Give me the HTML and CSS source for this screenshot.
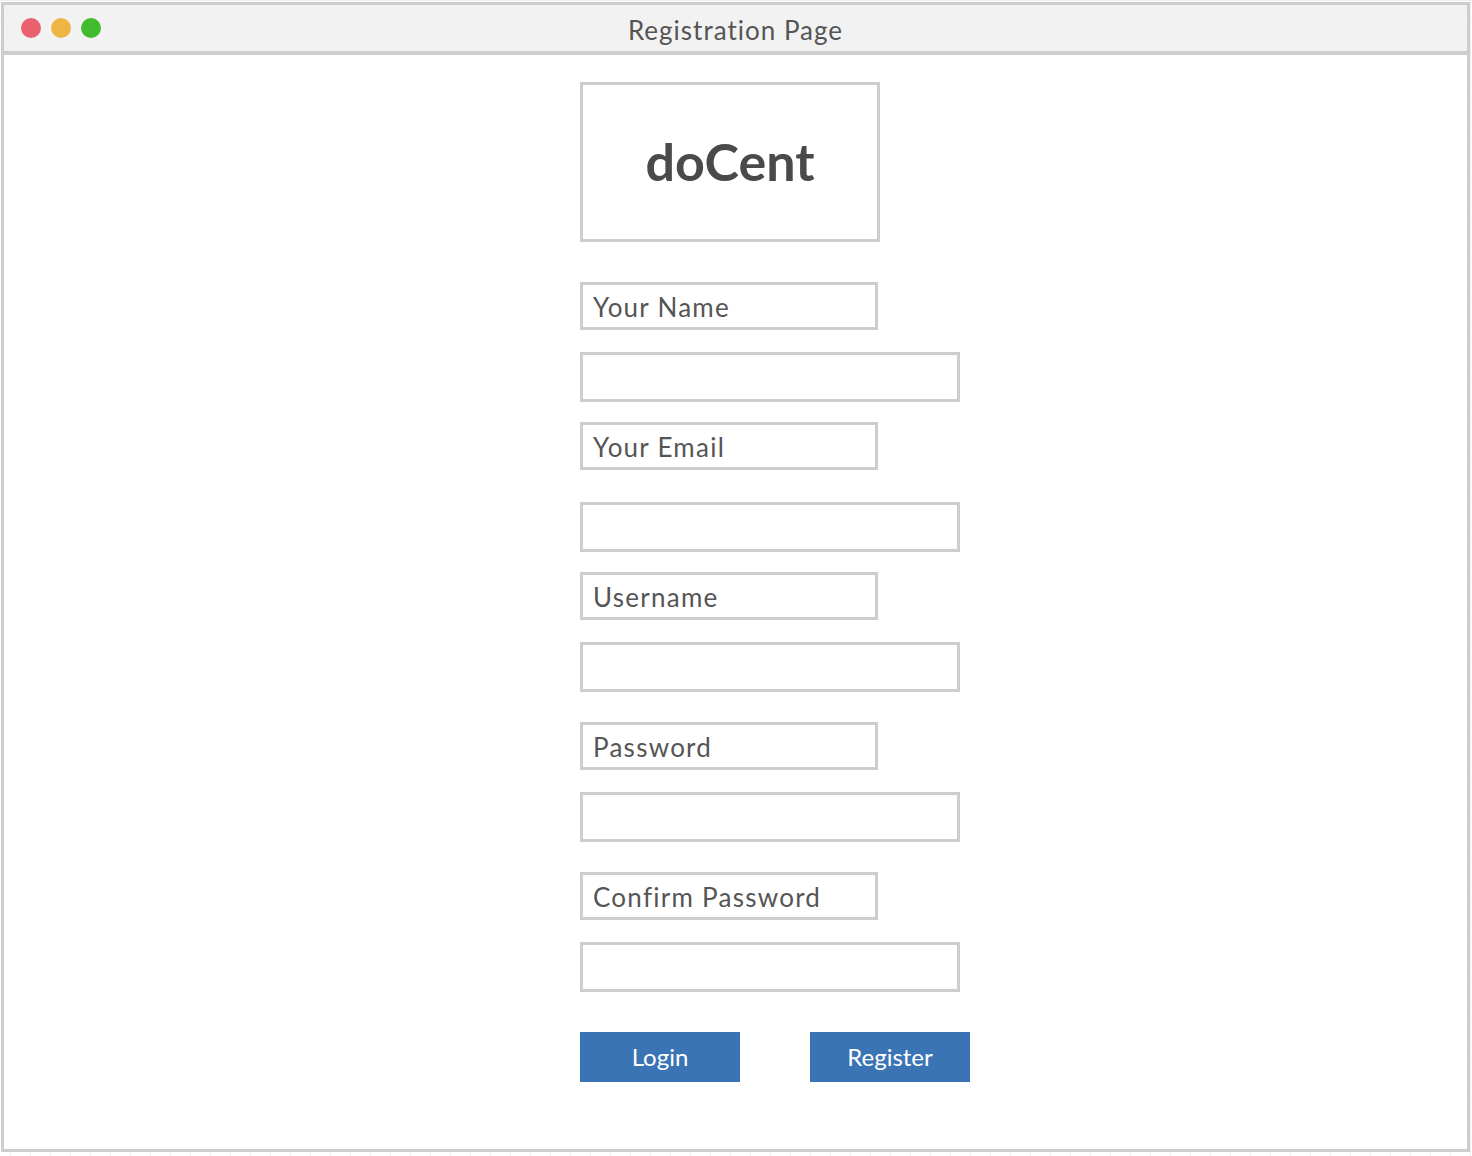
FILE: index.html
```html
<!DOCTYPE html>
<html lang="en">
<head>
<meta charset="utf-8">
<title>Registration Page</title>
<link rel="stylesheet" href="styles.css">
</head>
<body>
<div class="window">
  <div class="titlebar">
    <div class="dots">
      <span class="dot dot-red"></span>
      <span class="dot dot-yellow"></span>
      <span class="dot dot-green"></span>
    </div>
    <div class="title">Registration Page</div>
  </div>
  <div class="content">
    <div class="form">
      <div class="logo">doCent</div>
      <div class="label label-first">Your Name</div>
      <div class="input input-near"></div>
      <div class="label label-near">Your Email</div>
      <div class="input input-far"></div>
      <div class="label label-near">Username</div>
      <div class="input input-near"></div>
      <div class="label label-far">Password</div>
      <div class="input input-near"></div>
      <div class="label label-far">Confirm Password</div>
      <div class="input input-near"></div>
      <div class="buttons">
        <button class="btn">Login</button>
        <button class="btn">Register</button>
      </div>
    </div>
  </div>
</div>
</body>
</html>
```

FILE: styles.css
```css
html, body {
  margin: 0;
  padding: 0;
}
body {
  width: 1472px;
  height: 1156px;
  overflow: hidden;
  background-color: #ffffff;
  background-image:
    linear-gradient(to right, #efefef 1px, transparent 1px),
    linear-gradient(to bottom, #efefef 1px, transparent 1px);
  background-size: 20px 20px;
  background-position: 10px 0;
  font-family: Lato, "Open Sans", sans-serif;
}
.window {
  box-sizing: border-box;
  margin: 2px 0 0 1px;
  width: 1469px;
  height: 1150px;
  border: 3px solid #cdcdcd;
  background: #ffffff;
  display: flex;
  flex-direction: column;
}
.titlebar {
  position: relative;
  box-sizing: border-box;
  height: 50px;
  background: #f2f2f2;
  border-bottom: 4px solid #cdcdcd;
  display: flex;
  align-items: center;
  justify-content: center;
}
.dots {
  position: absolute;
  left: 17px;
  top: 13px;
  display: flex;
  gap: 10px;
}
.dot {
  width: 20px;
  height: 20px;
  border-radius: 50%;
}
.dot-red { background: #e9606e; }
.dot-yellow { background: #edb544; }
.dot-green { background: #42bb2e; }
.title {
  font-size: 26px;
  letter-spacing: 1px;
  color: #555555;
  margin-top: 4px;
}
.content {
  flex: 1;
  padding-left: 576px;
  padding-top: 27px;
}
.form {
  display: flex;
  flex-direction: column;
  align-items: flex-start;
}
.logo {
  box-sizing: border-box;
  width: 300px;
  height: 160px;
  border: 3px solid #cdcdcd;
  display: flex;
  align-items: center;
  justify-content: center;
  font-size: 52px;
  font-weight: 700;
  color: #4a4a4a;
  padding-bottom: 2px;
}
.label {
  box-sizing: border-box;
  width: 298px;
  height: 48px;
  border: 3px solid #cdcdcd;
  padding-left: 10px;
  font-size: 26px;
  letter-spacing: 1.25px;
  color: #555555;
  line-height: 44px;
}
.label-first { margin-top: 40px; }
.label-near { margin-top: 20px; }
.label-far { margin-top: 30px; }
.input {
  box-sizing: border-box;
  width: 380px;
  height: 50px;
  border: 3px solid #cdcdcd;
}
.input-near { margin-top: 22px; }
.input-far { margin-top: 32px; }
.buttons {
  margin-top: 40px;
  display: flex;
  gap: 70px;
}
.btn {
  width: 160px;
  height: 50px;
  border: none;
  background: #3b74b5;
  color: #ffffff;
  font-family: Lato, "Open Sans", sans-serif;
  font-size: 24px;
  padding: 0 0 1px 0;
}
```
